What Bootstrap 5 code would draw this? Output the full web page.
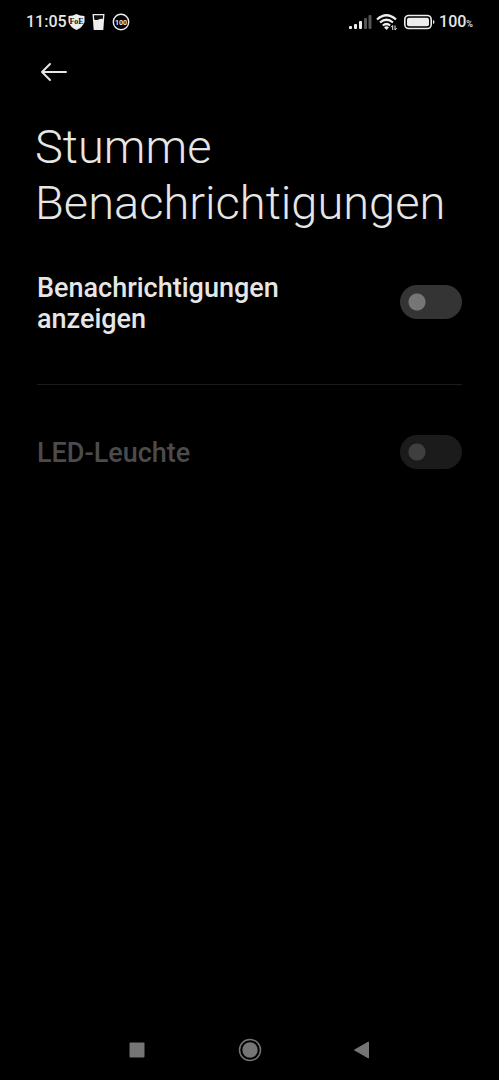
<!DOCTYPE html>
<html lang="de" data-bs-theme="dark">
<head>
<meta charset="utf-8">
<meta name="viewport" content="width=device-width, initial-scale=1">
<title>Stumme Benachrichtigungen</title>
<link rel="stylesheet" href="https://cdn.jsdelivr.net/npm/bootstrap@5.3.0/dist/css/bootstrap.min.css">
<style>
  body { background: #000; color: #e6e6e6; font-family: Roboto, "Noto Sans", sans-serif; }
  svg { display: block; flex: none; }
  .status-bar { height: 44px; padding: 0 26px; font-size: 16px; line-height: 20px; font-weight: 500; }
  .status-bar .percent { font-size: 9px; line-height: 16px; }
  .status-icons { gap: 7px; margin-left: 1px; }
  .back-btn { margin: 14px 0 0 40px; }
  .page-title { margin: 33px 36px 0 35px; font-size: 47px; line-height: 56px; font-weight: 300; color: #e6e6e6; }
  .settings { padding: 0 37px; }
  .setting { min-height: 134px; }
  .setting + .setting { border-top: 1px solid #1c1c1c; }
  .setting-first { padding: 38px 0 49px; min-height: 0; }
  .setting-label { padding-top: 4px; font-size: 27px; line-height: 31px; font-weight: 500; max-width: 300px; }
  .form-check-input.toggle {
    width: 62px; height: 34px; margin: 0; float: none; border: 0; box-shadow: none;
    border-radius: 17px; background-color: #343434;
    background-image: radial-gradient(circle at 17px 17px, #767676 8px, transparent 9px);
    background-size: 100% 100%; background-position: left center;
  }
  .form-check-input.toggle:checked { background-color: #0d84ff; background-image: radial-gradient(circle at 45px 17px, #fff 8px, transparent 9px); }
  .setting-off { color: #4b4b4b; }
  .form-check-input.toggle:disabled { opacity: 1; background-color: #1b1b1b; background-image: radial-gradient(circle at 17px 17px, #3f3f3f 8px, transparent 9px); }
  .nav-keys { height: 60px; padding: 0 81px; }
  .nav-keys .btn { width: 112px; }
</style>
<script defer src="https://cdn.jsdelivr.net/npm/bootstrap@5.3.0/dist/js/bootstrap.bundle.min.js"></script>
</head>
<body>
<div class="d-flex flex-column min-vh-100">
  <header class="status-bar d-flex align-items-center justify-content-between">
    <div class="d-flex align-items-center">
      <time>11:05</time>
      <div class="status-icons d-flex align-items-center">
      <svg width="17" height="18" viewBox="0 0 17 18" role="img" aria-label="FoE"><path d="M0.500 3Q5 3 8.500 1Q12 3 16.500 3V9Q15 14 8.500 17Q2 14 0.500 9Z" fill="#eee"/><text x="8.500" y="11" text-anchor="middle" font-family="Liberation Serif, serif" font-weight="700" font-size="8" fill="#111">FoE</text></svg>
      <svg width="13" height="18" viewBox="0 0 13 18" aria-hidden="true"><path d="M0.500 1H12.500L11.300 17H1.700Z" fill="#eee"/><path d="M1.900 2.300H11.100L10.800 6Q8.500 5.500 6.500 6.500T2.200 6.500Z" fill="#111"/></svg>
      <svg width="18" height="18" viewBox="0 0 18 18" role="img" aria-label="100"><circle cx="9" cy="9" r="7.700" fill="none" stroke="#eee" stroke-width="1.400"/><text x="9" y="11.500" text-anchor="middle" font-family="Roboto, sans-serif" font-weight="700" font-size="7" fill="#eee">100</text></svg>
      </div>
    </div>
    <div class="d-flex align-items-center">
      <svg width="23" height="18" viewBox="0 0 23 18" aria-label="Mobilfunk" role="img"><g fill="#eee"><rect x="0" y="13" width="3" height="3" rx="1"/><rect x="5" y="11" width="3" height="5" rx="1"/><rect x="10" y="8" width="3" height="8" rx="1"/></g><g fill="#555"><rect x="15" y="5" width="3" height="11" rx="1"/><rect x="19.500" y="2" width="3" height="14" rx="1"/></g></svg>
      <svg class="ms-1" width="23" height="18" viewBox="0 0 23 18" aria-label="WLAN" role="img"><g fill="none" stroke="#eee" stroke-width="2.200"><path d="M1 6.500Q10.500-2 20 6.500"/><path d="M4 9.500Q10.500 4 17 9.500"/><path d="M6.800 12.500Q10.500 9.500 14.200 12.500"/></g><path d="M8 14.200Q10.500 12.500 13 14.200L10.500 17Z" fill="#eee"/><path d="M16.700 17V12.500L15 14.300M19 12.500V17L20.700 15.200" fill="none" stroke="#eee" stroke-width="1"/></svg>
      <svg class="ms-1" width="32" height="18" viewBox="0 0 32 18" aria-label="Akku" role="img"><rect x="1.800" y="2.500" width="26.400" height="13" rx="4" fill="none" stroke="#eee" stroke-width="1.600"/><rect x="4" y="4.700" width="22" height="8.600" rx="2" fill="#eee"/><path d="M30 7Q31.500 7.500 31.500 9T30 11Z" fill="#eee"/></svg>
      <span class="d-flex align-items-end ms-1">100<span class="percent">%</span></span>
    </div>
  </header>

  <main class="flex-grow-1">
    <button class="btn back-btn d-block p-0 border-0" type="button" aria-label="Zurück">
      <svg width="28" height="28" viewBox="0 0 28 28" fill="none" stroke="#e6e6e6" stroke-width="2" stroke-linecap="round" stroke-linejoin="round"><path d="M26 14H2M10 6L2 14L10 22"/></svg>
    </button>
    <h1 class="page-title">Stumme Benachrichtigungen</h1>
    <div class="settings">
      <div class="setting setting-first d-flex align-items-center justify-content-between">
        <label class="setting-label" for="show">Benachrichtigungen anzeigen</label>
        <div class="form-switch p-0"><input class="form-check-input toggle d-block" type="checkbox" role="switch" id="show"></div>
      </div>
      <div class="setting setting-off d-flex align-items-center justify-content-between">
        <label class="setting-label" for="led">LED-Leuchte</label>
        <div class="form-switch p-0"><input class="form-check-input toggle d-block" type="checkbox" role="switch" id="led" disabled></div>
      </div>
    </div>
  </main>

  <nav class="nav-keys d-flex align-items-center justify-content-between" aria-label="Systemtasten">
    <button class="btn p-0 border-0 d-flex justify-content-center" type="button" aria-label="Letzte Apps"><svg width="24" height="24" viewBox="0 0 24 24"><rect x="4.500" y="4.500" width="15" height="15" rx="1" fill="#757575"/></svg></button>
    <button class="btn p-0 border-0 d-flex justify-content-center" type="button" aria-label="Startseite"><svg width="24" height="24" viewBox="0 0 24 24"><circle cx="12" cy="12" r="10.500" fill="none" stroke="#757575" stroke-width="1.500"/><circle cx="12" cy="12" r="7.700" fill="#757575"/></svg></button>
    <button class="btn p-0 border-0 d-flex justify-content-center" type="button" aria-label="Zurück"><svg width="24" height="24" viewBox="0 0 24 24"><path d="M4.500 12L18.500 4V20Z" fill="#757575" stroke="#757575" stroke-linejoin="round"/></svg></button>
  </nav>
</div>
</body>
</html>
